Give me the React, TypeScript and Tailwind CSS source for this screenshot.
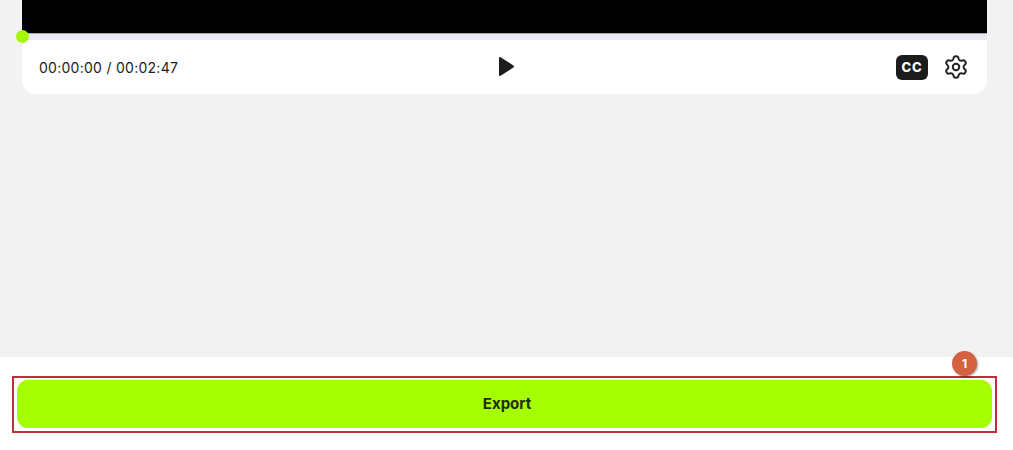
import React from "react";
import { Settings } from "lucide-react";

export default function App() {
  return (
    <div className="w-[1013px] h-[450px] overflow-hidden bg-white flex flex-col font-['Inter',_sans-serif]">
      <div className="h-[357px] bg-[#f2f2f2] pl-[22px] pr-[26px] flex flex-col">
        <div className="h-[34px] bg-black border-b border-[#a8a8a8]" />
        <div className="relative z-10 h-[6px] bg-[#e9e9f1]">
          <div className="absolute left-[-6px] top-[-4px] w-[13px] h-[13px] rounded-full bg-[#a6f70a]" />
        </div>
        <div className="h-[54px] bg-white rounded-b-[14px] flex items-center justify-between pl-[17px] pr-[18px] relative">
          <span className="text-[14px] leading-[20px] tracking-[0.27px] text-[#222] mt-[2px]">00:00:00 / 00:02:47</span>
          <svg className="absolute left-[476px] top-[16px]" width="17" height="21" viewBox="0 0 17 21">
            <path d="M1 2 L1 19 Q1 20.6 2.6 19.8 L15.4 11.6 Q16.4 10.5 15.4 9.4 L2.6 1.2 Q1 0.4 1 2 Z" fill="#1c1c1c" />
          </svg>
          <div className="flex items-center gap-[15px]">
            <div className="w-[32px] h-[25px] rounded-[6px] bg-[#1c1c1c] flex items-center justify-center text-white text-[13px] font-extrabold leading-none tracking-[0.8px]">CC</div>
            <Settings size={26} strokeWidth={1.8} color="#222" />
          </div>
        </div>
      </div>
      <div className="relative flex-1 pt-[23px] pl-[17px] pr-[21px]">
        <button className="w-[975px] h-[48px] pl-[5px] pt-[1px] rounded-[11px] bg-[#a6ff00] text-[15px] font-bold text-[#1f2a14]">Export</button>
        <div className="absolute left-[12px] top-[19px] w-[985px] h-[57px] border-2 border-[#c22d3a]" />
        <div className="absolute left-[952px] top-[-6px] w-[25px] h-[25px] rounded-full bg-[#d4613f] shadow-[1px_1px_2px_rgba(0,0,0,0.35)] flex items-center justify-center text-white text-[12px] font-bold">1</div>
      </div>
    </div>
  );
}
